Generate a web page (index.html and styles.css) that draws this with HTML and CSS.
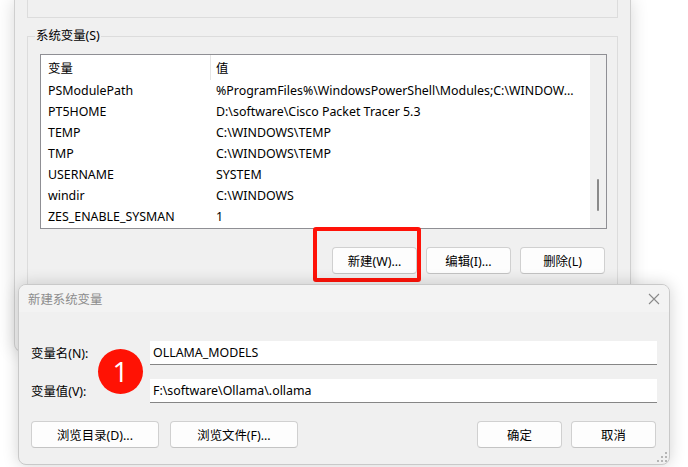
FILE: index.html
```html
<!DOCTYPE html>
<html lang="zh-CN">
<head>
<meta charset="utf-8">
<title>新建系统变量</title>
<link rel="stylesheet" href="styles.css">
</head>
<body>
<div class="screen">
  <div class="backwin">
    <div class="usergroup"></div>
    <fieldset class="sysgroup">
      <legend class="legend">系统变量(S)</legend>
      <div class="list">
        <div class="listmain">
          <div class="lrow lhead"><div class="c1">变量</div><div class="c2 hc2">值</div></div>
          <div class="lrow"><div class="c1">PSModulePath</div><div class="c2">%ProgramFiles%\WindowsPowerShell\Modules;C:\WINDOW...</div></div>
          <div class="lrow"><div class="c1">PT5HOME</div><div class="c2">D:\software\Cisco Packet Tracer 5.3</div></div>
          <div class="lrow"><div class="c1">TEMP</div><div class="c2">C:\WINDOWS\TEMP</div></div>
          <div class="lrow"><div class="c1">TMP</div><div class="c2">C:\WINDOWS\TEMP</div></div>
          <div class="lrow"><div class="c1">USERNAME</div><div class="c2">SYSTEM</div></div>
          <div class="lrow"><div class="c1">windir</div><div class="c2">C:\WINDOWS</div></div>
          <div class="lrow"><div class="c1">ZES_ENABLE_SYSMAN</div><div class="c2">1</div></div>
        </div>
        <div class="vscroll"><div class="thumb"></div></div>
      </div>
      <div class="btnrow">
        <div class="btn w85">新建(W)...</div>
        <div class="btn w85">编辑(I)...</div>
        <div class="btn w85">删除(L)</div>
      </div>
    </fieldset>
  </div>

  <div class="highlight"></div>

  <div class="dialog">
    <div class="titlebar">
      <div class="title">新建系统变量</div>
      <svg class="close" width="12" height="12" viewBox="0 0 12 12"><path d="M1 1 L11 11 M11 1 L1 11" stroke="#8a8a8a" stroke-width="1.1" fill="none"/></svg>
    </div>
    <div class="dbody">
      <div class="frow"><div class="flabel">变量名(N):</div><div class="finput">OLLAMA_MODELS</div></div>
      <div class="frow"><div class="flabel">变量值(V):</div><div class="finput">F:\software\Ollama\.ollama</div></div>
      <div class="dbtns">
        <div class="btn w128">浏览目录(D)...</div>
        <div class="btn w128">浏览文件(F)...</div>
        <div class="spacer"></div>
        <div class="btn w85">确定</div>
        <div class="btn w85">取消</div>
      </div>
    </div>
    <svg class="grip" width="12" height="12" viewBox="0 0 12 12">
      <rect x="9" y="1" width="2" height="2" fill="#b5b5b5"/>
      <rect x="5" y="5" width="2" height="2" fill="#b5b5b5"/>
      <rect x="9" y="5" width="2" height="2" fill="#b5b5b5"/>
      <rect x="1" y="9" width="2" height="2" fill="#b5b5b5"/>
      <rect x="5" y="9" width="2" height="2" fill="#b5b5b5"/>
      <rect x="9" y="9" width="2" height="2" fill="#b5b5b5"/>
    </svg>
  </div>

  <div class="badge">1</div>
</div>
</body>
</html>
```
FILE: styles.css
```css
* { box-sizing: border-box; }
html, body { margin: 0; padding: 0; background: #ffffff; }
body {
  font-family: "Noto Sans", "Noto Sans CJK SC", sans-serif;
  font-size: 12.4px;
  color: #000000;
}
.screen {
  position: relative;
  width: 688px;
  height: 467px;
  overflow: hidden;
  background: #ffffff;
}
.backwin {
  margin-left: 14px;
  width: 617px;
  height: 352px;
  background: #f0f0f0;
  border: 1px solid #cfcfcf;
  border-top: none;
  border-radius: 0 0 8px 8px;
  box-shadow: 0 0 18px rgba(0,0,0,0.16);
  padding: 0 12px 0 12px;
}
.usergroup {
  height: 18px;
  border: 1px solid #dcdcdc;
  border-top: none;
}
.sysgroup {
  margin: 10px 0 0 0;
  padding: 10px 11px 0 7px;
  border: 1px solid #dcdcdc;
  height: 270px;
  min-width: 0;
}
.legend {
  padding: 0 1px;
  line-height: 16px;
  height: 16px;
}
.list {
  margin-left: 5px;
  width: 567px;
  height: 175px;
  border: 1px solid #8f8f94;
  background: #ffffff;
  display: flex;
}
.listmain { flex: 1; min-width: 0; }
.lrow {
  display: flex;
  height: 21px;
  align-items: center;
  white-space: nowrap;
}
.lhead { height: 25px; }
.c1 { width: 169px; padding-left: 7px; }
.c2 { flex: 1; padding-left: 6px; overflow: hidden; }
.hc2 { border-left: 1px solid #e5e5e5; height: 25px; display: flex; align-items: center; padding-left: 5px; }
.vscroll {
  width: 16px;
  background: #f0f0f0;
  display: flex;
  justify-content: center;
  padding-top: 124px;
}
.thumb {
  width: 2px;
  height: 32px;
  background: #8a8a8a;
  border-radius: 1px;
}
.btnrow {
  display: flex;
  justify-content: flex-end;
  gap: 9px;
  margin-top: 18px;
  margin-right: 1px;
}
.btn {
  height: 27px;
  background: #fdfdfd;
  border: 1px solid #d0d0d0;
  border-bottom-color: #c4c4c4;
  border-radius: 4px;
  display: flex;
  align-items: center;
  justify-content: center;
}
.w85 { width: 85px; }
.w128 { width: 128px; }

.highlight {
  position: absolute;
  left: 313px;
  top: 227px;
  width: 108px;
  height: 55px;
  border: 4px solid #ff1208;
  border-radius: 3px;
}

.dialog {
  position: absolute;
  left: 18px;
  top: 284px;
  width: 652px;
  height: 181px;
  background: #f0f0f0;
  border: 1px solid #c9c9c9;
  border-radius: 8px;
  box-shadow: 0 0 16px rgba(0,0,0,0.18);
  overflow: hidden;
}
.titlebar {
  height: 27px;
  background: #f3f3f3;
  display: flex;
  align-items: center;
  justify-content: space-between;
  padding: 0 9px 0 9px;
}
.title { color: #8c8c8c; }
.close { display: block; }
.dbody {
  padding: 29px 12px 0 12px;
}
.frow {
  display: flex;
  align-items: center;
  height: 24px;
  margin-bottom: 14px;
}
.flabel { width: 119px; padding-bottom: 1px; }
.finput {
  flex: 1;
  height: 24px;
  background: #ffffff;
  border-bottom: 1px solid #868686;
  display: flex;
  align-items: center;
  padding-left: 3px;
}
.dbtns {
  display: flex;
  gap: 11px;
  margin-top: 18px;
  padding-right: 1px;
}
.dbtns .w85 + .w85 { margin-left: -2px; }
.spacer { flex: 1; }
.grip {
  position: absolute;
  right: 1px;
  bottom: 1px;
}
.badge {
  position: absolute;
  left: 98px;
  top: 349px;
  width: 45px;
  height: 45px;
  border-radius: 50%;
  background: #ff1204;
  color: #ffffff;
  font-family: "Open Sans", "Noto Sans", sans-serif;
  font-size: 28px;
  line-height: 45px;
  text-align: center;
}
```
